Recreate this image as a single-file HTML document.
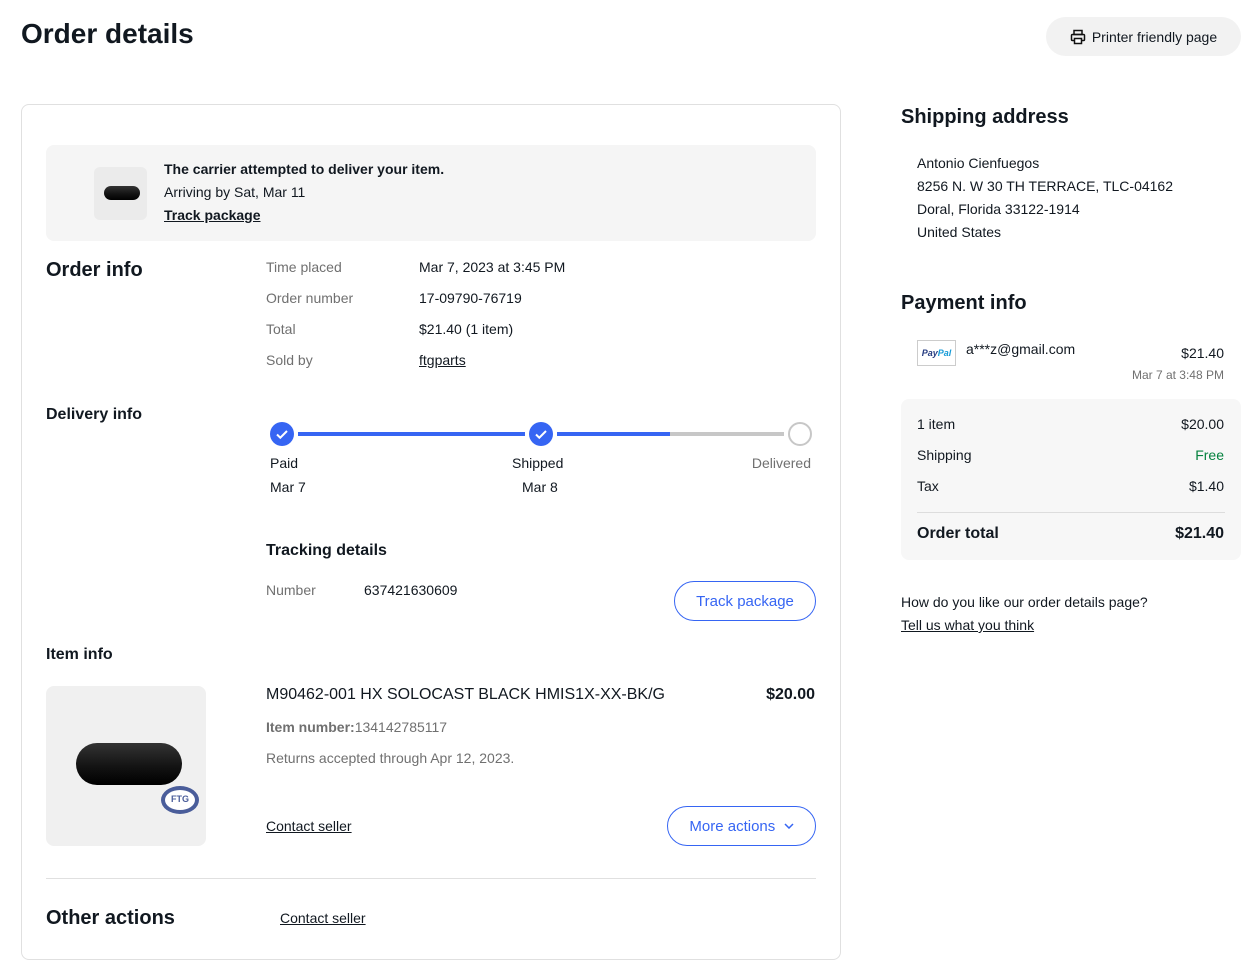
<!DOCTYPE html>
<html><head><meta charset="utf-8"><style>
*{margin:0;padding:0;box-sizing:border-box}
body{width:1253px;height:970px;background:#fff;font-family:"Liberation Sans",sans-serif;color:#111820;position:relative;overflow:hidden;font-size:14px}
.a{position:absolute;white-space:nowrap}
.r{position:absolute;white-space:nowrap;text-align:right}
.g{color:#707070}
u{text-decoration:underline}
.btn{position:absolute;border:1px solid #3665f3;color:#3665f3;border-radius:20px;font-size:15px;display:flex;align-items:center;justify-content:center}
.mic{position:absolute;background:linear-gradient(#333,#111 60%,#000);border-radius:40px}
</style></head><body>
<div class="a" style="left:21px;top:18px;font-size:28px;font-weight:bold">Order details</div>
<div class="a" style="left:1046px;top:17px;width:195px;height:39px;background:#f2f2f2;border-radius:20px;font-size:14px;display:flex;align-items:center;justify-content:center;gap:6px">
<svg width="16" height="16" viewBox="0 0 16 16" fill="none" stroke="#111" stroke-width="1.5"><rect x="4" y="1.5" width="8" height="4"/><rect x="1.5" y="5.5" width="13" height="6" rx="1"/><rect x="4.5" y="9.5" width="7" height="5" fill="#fff"/></svg>Printer friendly page</div>

<div class="a" style="left:21px;top:104px;width:820px;height:856px;border:1px solid #e0e0e0;border-radius:8px"></div>
<div class="a" style="left:46px;top:145px;width:770px;height:96px;background:#f5f5f5;border-radius:8px"></div>
<div class="a" style="left:94px;top:167px;width:53px;height:53px;background:#ebebeb;border-radius:6px"></div>
<div class="mic" style="left:104px;top:186px;width:36px;height:14px"></div>
<div class="a" style="left:164px;top:161px;font-size:14px;font-weight:bold">The carrier attempted to deliver your item.</div>
<div class="a" style="left:164px;top:184px;font-size:14px">Arriving by Sat, Mar 11</div>
<div class="a" style="left:164px;top:207px;font-size:14px;font-weight:bold"><u>Track package</u></div>

<div class="a" style="left:46px;top:259px;font-size:20px;font-weight:bold">Order info</div>
<div class="a g" style="left:266px;top:258px;line-height:18px">Time placed</div>
<div class="a" style="left:419px;top:258px;line-height:18px">Mar 7, 2023 at 3:45 PM</div>
<div class="a g" style="left:266px;top:289px;line-height:18px">Order number</div>
<div class="a" style="left:419px;top:289px;line-height:18px">17-09790-76719</div>
<div class="a g" style="left:266px;top:320px;line-height:18px">Total</div>
<div class="a" style="left:419px;top:320px;line-height:18px">$21.40 (1 item)</div>
<div class="a g" style="left:266px;top:351px;line-height:18px">Sold by</div>
<div class="a" style="left:419px;top:351px;line-height:18px"><u>ftgparts</u></div>

<div class="a" style="left:46px;top:406px;font-size:16px;font-weight:bold">Delivery info</div>
<div class="a" style="left:298px;top:432px;width:227px;height:4px;background:#3665f3"></div>
<div class="a" style="left:557px;top:432px;width:113px;height:4px;background:#3665f3"></div>
<div class="a" style="left:670px;top:432px;width:114px;height:4px;background:#c7c7c7"></div>
<svg class="a" style="left:270px;top:422px" width="24" height="24"><circle cx="12" cy="12" r="12" fill="#3665f3"/><path d="M7 12.5l3.3 3.2L17 9" stroke="#fff" stroke-width="2" fill="none"/></svg>
<svg class="a" style="left:529px;top:422px" width="24" height="24"><circle cx="12" cy="12" r="12" fill="#3665f3"/><path d="M7 12.5l3.3 3.2L17 9" stroke="#fff" stroke-width="2" fill="none"/></svg>
<svg class="a" style="left:788px;top:422px" width="24" height="24"><circle cx="12" cy="12" r="11" fill="#fff" stroke="#c7c7c7" stroke-width="2"/></svg>
<div class="a" style="left:270px;top:455px">Paid</div>
<div class="a" style="left:270px;top:479px">Mar 7</div>
<div class="a" style="left:512px;top:455px">Shipped</div>
<div class="a" style="left:522px;top:479px">Mar 8</div>
<div class="r" style="right:442px;top:455px;color:#707070">Delivered</div>

<div class="a" style="left:266px;top:542px;font-size:16px;font-weight:bold">Tracking details</div>
<div class="a g" style="left:266px;top:582px">Number</div>
<div class="a" style="left:364px;top:582px">637421630609</div>
<div class="btn" style="left:674px;top:581px;width:142px;height:40px">Track package</div>

<div class="a" style="left:46px;top:646px;font-size:16px;font-weight:bold">Item info</div>
<div class="a" style="left:46px;top:686px;width:160px;height:160px;background:#f0f0f0;border-radius:8px"></div>
<div class="mic" style="left:76px;top:743px;width:106px;height:42px"></div>
<div class="a" style="left:161px;top:786px;width:38px;height:28px;border:4px solid #4a5d9a;border-radius:50%;background:#fff;font-size:9px;color:#4a5d9a;text-align:center;line-height:18px;font-weight:bold">FTG</div>
<div class="a" style="left:266px;top:686px;font-size:16px">M90462-001 HX SOLOCAST BLACK HMIS1X-XX-BK/G</div>
<div class="r" style="right:438px;top:686px;font-size:16px;font-weight:bold">$20.00</div>
<div class="a g" style="left:266px;top:719px"><b>Item number:</b>134142785117</div>
<div class="a g" style="left:266px;top:750px">Returns accepted through Apr 12, 2023.</div>
<div class="a" style="left:266px;top:818px"><u>Contact seller</u></div>
<div class="btn" style="left:667px;top:806px;width:149px;height:40px">More actions&nbsp;&nbsp;<svg width="10" height="6"><path d="M1 1l4 4 4-4" stroke="#3665f3" stroke-width="1.5" fill="none"/></svg></div>
<div class="a" style="left:46px;top:878px;width:770px;height:1px;background:#e0e0e0"></div>
<div class="a" style="left:46px;top:907px;font-size:20px;font-weight:bold">Other actions</div>
<div class="a" style="left:280px;top:910px"><u>Contact seller</u></div>

<div class="a" style="left:901px;top:106px;font-size:20px;font-weight:bold">Shipping address</div>
<div class="a" style="left:917px;top:152px;line-height:23px">Antonio Cienfuegos<br>8256 N. W 30 TH TERRACE, TLC-04162<br>Doral, Florida 33122-1914<br>United States</div>
<div class="a" style="left:901px;top:292px;font-size:20px;font-weight:bold">Payment info</div>
<div class="a" style="left:917px;top:340px;width:39px;height:26px;border:1px solid #ccc;font-size:9px;font-style:italic;font-weight:bold;color:#253b80;display:flex;align-items:center;justify-content:center">Pay<span style="color:#179bd7">Pal</span></div>
<div class="a" style="left:966px;top:341px">a***z@gmail.com</div>
<div class="r" style="right:29px;top:345px">$21.40</div>
<div class="r g" style="right:29px;top:368px;font-size:12px">Mar 7 at 3:48 PM</div>
<div class="a" style="left:901px;top:399px;width:340px;height:161px;background:#f7f7f7;border-radius:8px"></div>
<div class="a" style="left:917px;top:416px">1 item</div><div class="r" style="right:29px;top:416px">$20.00</div>
<div class="a" style="left:917px;top:447px">Shipping</div><div class="r" style="right:29px;top:447px;color:#05823f">Free</div>
<div class="a" style="left:917px;top:478px">Tax</div><div class="r" style="right:29px;top:478px">$1.40</div>
<div class="a" style="left:917px;top:512px;width:308px;height:1px;background:#ddd"></div>
<div class="a" style="left:917px;top:525px;font-size:16px;font-weight:bold">Order total</div>
<div class="r" style="right:29px;top:525px;font-size:16px;font-weight:bold">$21.40</div>
<div class="a" style="left:901px;top:594px">How do you like our order details page?</div>
<div class="a" style="left:901px;top:617px"><u>Tell us what you think</u></div>
</body></html>
